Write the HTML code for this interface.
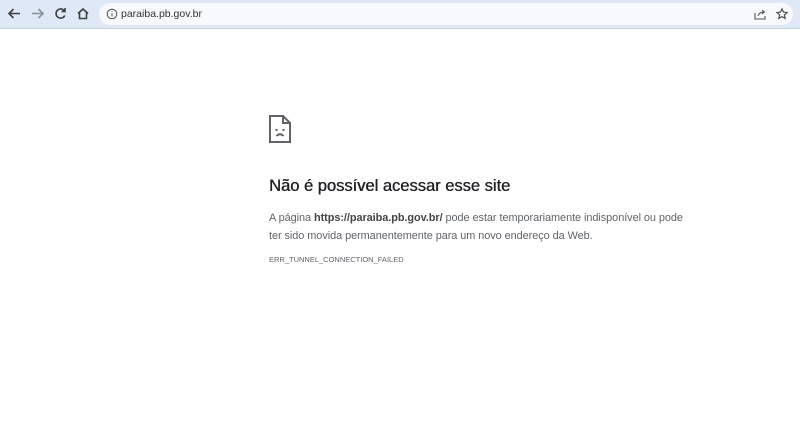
<!DOCTYPE html>
<html><head><meta charset="utf-8"><style>
html,body{margin:0;padding:0;width:800px;height:439px;overflow:hidden;background:#fff;font-family:"Liberation Sans",sans-serif;}
.bar{position:absolute;left:0;top:0;width:800px;height:28px;background:#dfe8f6;border-bottom:1px solid #c8d3e6;}
.omni{position:absolute;left:99px;top:3px;width:694px;height:22px;border-radius:11px;background:#f7f9fd;}
.url{position:absolute;left:121px;top:8px;font-size:10.5px;color:#333;}
svg{position:absolute;}
h1{position:absolute;left:269px;top:177px;margin:0;font-size:16.5px;font-weight:normal;color:#202124;text-shadow:0.4px 0 0 #202124;}
.p{position:absolute;left:269px;top:209px;font-size:10.9px;line-height:18px;color:#5f6368;white-space:nowrap;letter-spacing:-0.05px;}
.p b{color:#444;}
.code{position:absolute;left:269px;top:255px;font-size:7.5px;color:#5f6368;}
</style></head><body>
<div class="bar"></div>
<div class="omni"></div>
<svg width="100" height="28" viewBox="0 0 100 28">
<g fill="none" stroke="#3c4043" stroke-width="1.6">
<path d="M20 13.5H9M13.5 9l-4.5 4.5 4.5 4.5"/>
<path d="M32 13.5h11M38.5 9l4.5 4.5-4.5 4.5" stroke="#8a9099"/>
<path d="M64.5 11a4.6 4.6 0 1 0 .3 4.5"/><path d="M65 8v3.5h-3.5"/>
<path d="M78 13.5l5-4.5 5 4.5M79.5 12.5v6h7v-6"/>
</g></svg>
<svg width="12" height="12" style="left:106px;top:8px" viewBox="0 0 12 12"><circle cx="6" cy="6" r="4.8" fill="none" stroke="#555" stroke-width="1"/><path d="M6 5.3v3M6 3.4v.9" stroke="#555" stroke-width="1"/></svg>
<div class="url">paraiba.pb.gov.br</div>
<svg width="14" height="14" style="left:753px;top:7px" viewBox="0 0 14 14"><path d="M2 6v6h10V9M5 9c1-3 3-4 6-4M9 3l2.5 2L9 7" fill="none" stroke="#555" stroke-width="1.1"/></svg>
<svg width="14" height="14" style="left:775px;top:7px" viewBox="0 0 14 14"><path d="M7 1.8l1.5 3.3 3.6.4-2.7 2.4.8 3.5L7 9.6l-3.2 1.8.8-3.5L1.9 5.5l3.6-.4z" fill="none" stroke="#444" stroke-width="1.1"/></svg>
<svg width="26" height="30" style="left:268px;top:114px" viewBox="0 0 26 30"><g fill="none" stroke="#5f6368" stroke-width="2"><path d="M2 2h13l0 0v7h7v19H2z"/><path d="M15 2l7 7"/><path d="M8.5 22c2-2.4 5-2.4 7 0"/></g><rect x="7.5" y="15" width="2" height="2" fill="#5f6368"/><rect x="14.5" y="15" width="2" height="2" fill="#5f6368"/></svg>
<h1>Não é possível acessar esse site</h1>
<div class="p">A página <b>https://paraiba.pb.gov.br/</b> pode estar temporariamente indisponível ou pode<br>ter sido movida permanentemente para um novo endereço da Web.</div>
<div class="code">ERR_TUNNEL_CONNECTION_FAILED</div>
</body></html>
